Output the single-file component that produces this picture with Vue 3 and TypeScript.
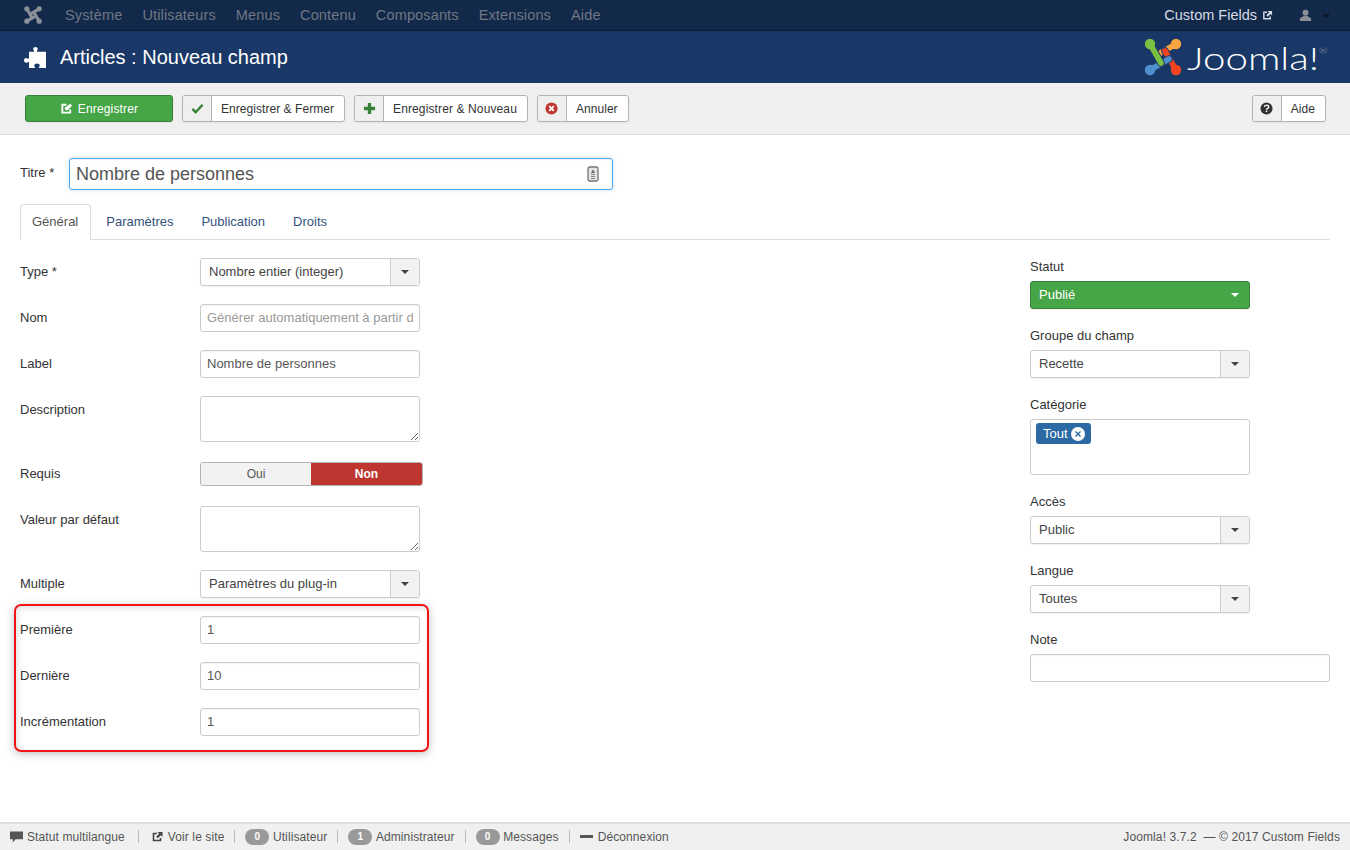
<script setup lang="ts">
const menu = ['Système', 'Utilisateurs', 'Menus', 'Contenu', 'Composants', 'Extensions', 'Aide']

const leftFields = [
  { label: 'Type *', kind: 'select', value: 'Nombre entier (integer)' },
  { label: 'Nom', kind: 'placeholder', value: 'Générer automatiquement à partir du titre' },
  { label: 'Label', kind: 'input', value: 'Nombre de personnes' },
  { label: 'Description', kind: 'textarea', value: '' },
  { label: 'Requis', kind: 'toggle', value: '' },
  { label: 'Valeur par défaut', kind: 'textarea', value: '' },
  { label: 'Multiple', kind: 'select', value: 'Paramètres du plug-in' },
]

const rangeFields = [
  { label: 'Première', value: '1' },
  { label: 'Dernière', value: '10' },
  { label: 'Incrémentation', value: '1' },
]

const tabs = ['Général', 'Paramètres', 'Publication', 'Droits']

// one arm of the logo, turned four times
const arm = 'M32 6L13 17'
const armColors = [
  { color: '#f9a541', turn: 0 },
  { color: '#f44321', turn: 90 },
  { color: '#5091cd', turn: 180 },
  { color: '#7ac143', turn: 270 },
]
</script>

<template>
  <div class="page">
    <nav class="navbar">
      <svg class="nav-logo" viewBox="0 0 38 38">
        <g v-for="a in armColors" :key="a.turn" :transform="`rotate(${a.turn} 19 19)`">
          <path :d="arm" fill="none" stroke="#8a8f98" stroke-width="6.500" stroke-linecap="round" />
          <circle cx="32" cy="6" r="5.500" fill="#8a8f98" />
        </g>
      </svg>
      <a v-for="item in menu" :key="item" class="nav-item">{{ item }}</a>
      <span class="nav-site">
        Custom Fields
        <svg class="ext" viewBox="0 0 12 12">
          <path d="M9 7v2.500H2v-7h3.500" fill="none" stroke="currentColor" stroke-width="1.600" />
          <path d="M6 1h5v5L9.300 4.300 6.300 7.300 4.700 5.700l3-3z" fill="currentColor" />
        </svg>
      </span>
      <svg class="nav-user" viewBox="0 0 14 14">
        <circle cx="7" cy="4" r="3.200" fill="#8a8f98" />
        <path d="M1 13v-2c0-2 3-2.500 4-3.500h4c1 1 4 1.500 4 3.500v2z" fill="#8a8f98" />
      </svg>
      <span class="nav-caret"></span>
    </nav>

    <header class="title-bar">
      <svg class="puzzle" viewBox="0 0 22 21">
        <path
          fill="#fff"
          d="M9.500 4.800c.4 0 .6-.2.6-.6 0-.9-.9-1.200-.9-2.200C9.200.7 10.300 0 11.500 0s2.300.7 2.300 2c0 1-.9 1.300-.9 2.200 0 .4.200.6.600.6H22V21h-6.500c-.4 0-.6-.2-.6-.5 0-.9.900-1.100.9-2 0-1.300-1.400-2-2.800-2s-2.800.7-2.800 2c0 .9.900 1.100.9 2 0 .3-.2.500-.6.500H5v-5.500c0-.4-.2-.6-.6-.6-.9 0-1.200.8-2.200.8C.8 15.700 0 14.500 0 13.300s.8-2.400 2.200-2.400c1 0 1.300.8 2.200.8.400 0 .6-.2.600-.6V4.800z"
        />
      </svg>
      <h1>Articles : Nouveau champ</h1>
      <div class="brand">
        <svg class="brand-mark" viewBox="0 0 38 38">
          <g v-for="a in armColors" :key="a.turn" :transform="`rotate(${a.turn} 19 19)`">
            <path :d="arm" fill="none" stroke="#1a3867" stroke-width="7.500" stroke-linecap="round" />
            <path :d="arm" fill="none" :stroke="a.color" stroke-width="5.500" stroke-linecap="round" />
            <circle cx="32" cy="6" r="5.200" :fill="a.color" />
          </g>
        </svg>
        <span class="brand-name">Joomla!<sup>®</sup></span>
      </div>
    </header>

    <div class="toolbar">
      <button class="tool tool-save">
        <svg class="ico" viewBox="0 0 14 14">
          <path d="M11 8v3.500H2.500V3H7" fill="none" stroke="#fff" stroke-width="2" />
          <path d="M5 6.500l1 2.500 2.500-.5L13 4l-2-2z" fill="#fff" />
        </svg>
        Enregistrer
      </button>
      <button class="tool">
        <span class="tool-icon">
          <svg class="ico" viewBox="0 0 14 14">
            <path d="M1.500 7.500l3.500 3.500 7.500-8" fill="none" stroke="#378137" stroke-width="2.600" />
          </svg>
        </span>
        <span class="tool-text">Enregistrer &amp; Fermer</span>
      </button>
      <button class="tool tool-new">
        <span class="tool-icon">
          <svg class="ico" viewBox="0 0 14 14">
            <path d="M7 1v12M1 7h12" fill="none" stroke="#378137" stroke-width="3.600" />
          </svg>
        </span>
        <span class="tool-text">Enregistrer &amp; Nouveau</span>
      </button>
      <button class="tool">
        <span class="tool-icon">
          <svg class="ico" viewBox="0 0 14 14">
            <circle cx="7" cy="7" r="6.500" fill="#bd362f" />
            <path d="M4.500 4.500l5 5M9.500 4.500l-5 5" stroke="#fff" stroke-width="2" />
          </svg>
        </span>
        <span class="tool-text">Annuler</span>
      </button>
      <button class="tool tool-help">
        <span class="tool-icon">
          <svg class="ico" viewBox="0 0 14 14">
            <circle cx="7" cy="7" r="6.500" fill="#333" />
            <path d="M4.800 5.400C4.900 4 5.900 3.400 7 3.400c1.300 0 2.300.8 2.300 1.900 0 1.700-2.300 1.500-2.300 3" fill="none" stroke="#fff" stroke-width="1.500" />
            <rect x="6.200" y="9.200" width="1.600" height="1.600" fill="#fff" />
          </svg>
        </span>
        <span class="tool-text">Aide</span>
      </button>
    </div>

    <main class="content">
      <div class="title-row">
        <label>Titre *</label>
        <div class="title-input">
          <input type="text" value="Nombre de personnes" />
          <svg class="contact-icon" viewBox="0 0 12 16">
            <rect x="1" y="1" width="10" height="14" rx="1.500" fill="#e4e4e4" stroke="#777" stroke-width="1.300" />
            <path d="M6 3.500L8 7H4z" fill="#666" />
            <path d="M4 8.500h4M4 10.500h4M4 12.500h4" stroke="#888" />
          </svg>
        </div>
      </div>

      <ul class="tabs">
        <li v-for="(tab, i) in tabs" :key="tab" :class="{ active: i === 0 }">{{ tab }}</li>
      </ul>

      <div class="columns">
        <div class="main-col">
          <div v-for="f in leftFields" :key="f.label" class="row" :class="{ 'row-toggle': f.kind === 'toggle' }">
            <label>{{ f.label }}</label>
            <div v-if="f.kind === 'select'" class="chosen">
              <span class="chosen-text">{{ f.value }}</span>
              <span class="chosen-arrow"><i></i></span>
            </div>
            <input v-else-if="f.kind === 'placeholder'" class="field" type="text" :placeholder="f.value" />
            <input v-else-if="f.kind === 'input'" class="field" type="text" :value="f.value" />
            <textarea v-else-if="f.kind === 'textarea'" class="area"></textarea>
            <div v-else class="toggle">
              <span class="toggle-off">Oui</span>
              <span class="toggle-on">Non</span>
            </div>
          </div>
          <div class="range-group">
            <div class="highlight"></div>
            <div v-for="f in rangeFields" :key="f.label" class="row">
              <label>{{ f.label }}</label>
              <input class="field" type="text" :value="f.value" />
            </div>
          </div>
        </div>

        <aside class="side-col">
          <div class="side-field">
            <label>Statut</label>
            <div class="chosen chosen-green">
              <span class="chosen-text">Publié</span>
              <span class="chosen-arrow"><i></i></span>
            </div>
          </div>
          <div class="side-field">
            <label>Groupe du champ</label>
            <div class="chosen">
              <span class="chosen-text">Recette</span>
              <span class="chosen-arrow"><i></i></span>
            </div>
          </div>
          <div class="side-field">
            <label>Catégorie</label>
            <div class="tag-box">
              <span class="tag">
                Tout
                <svg viewBox="0 0 14 14">
                  <circle cx="7" cy="7" r="7" fill="#fff" />
                  <path d="M4.500 4.500l5 5M9.500 4.500l-5 5" stroke="#2a69a3" stroke-width="1.400" />
                </svg>
              </span>
            </div>
          </div>
          <div class="side-field">
            <label>Accès</label>
            <div class="chosen">
              <span class="chosen-text">Public</span>
              <span class="chosen-arrow"><i></i></span>
            </div>
          </div>
          <div class="side-field">
            <label>Langue</label>
            <div class="chosen">
              <span class="chosen-text">Toutes</span>
              <span class="chosen-arrow"><i></i></span>
            </div>
          </div>
          <div class="side-field">
            <label>Note</label>
            <input class="field field-wide" type="text" />
          </div>
        </aside>
      </div>
    </main>

    <footer class="status">
      <span class="st st-first">
        <svg class="st-ico" viewBox="0 0 14 12"><path d="M0 0h14v8.500H6L3 12V8.500H0z" fill="#555" /></svg>
        Statut multilangue
      </span>
      <span class="st">
        <svg class="st-ico" viewBox="0 0 12 12">
          <path d="M9 7v2.500H2v-7h3.500" fill="none" stroke="#444" stroke-width="1.600" />
          <path d="M6 1h5v5L9.300 4.300 6.300 7.300 4.700 5.700l3-3z" fill="#444" />
        </svg>
        Voir le site
      </span>
      <span class="st"><b class="count">0</b>Utilisateur</span>
      <span class="st"><b class="count">1</b>Administrateur</span>
      <span class="st"><b class="count">0</b>Messages</span>
      <span class="st st-last"><i class="minus"></i>Déconnexion</span>
      <span class="copyright">Joomla! 3.7.2 &nbsp;— © 2017 Custom Fields</span>
    </footer>
  </div>
</template>

<style>
html,
body {
  margin: 0;
  background: #fff;
}
</style>

<style scoped>
.page {
  display: flex;
  flex-direction: column;
  width: 1350px;
  height: 850px;
  overflow: hidden;
  font-family: "Liberation Sans", Arial, sans-serif;
  font-size: 13px;
  color: #333;
}

.navbar {
  display: flex;
  align-items: center;
  height: 30px;
  padding: 0 20px 0 24px;
  background: #13294a;
  border-bottom: 1px solid #0c1b33;
  flex: none;
}

.nav-logo {
  width: 18px;
  height: 18px;
  margin-right: 23px;
}

.nav-item {
  margin-right: 20px;
  font-size: 14.500px;
  letter-spacing: .14px;
  color: #6f7785;
}

.nav-site {
  display: flex;
  align-items: center;
  gap: 5px;
  margin-left: auto;
  font-size: 14.500px;
  color: #d5dbe5;
}

.ext {
  width: 11px;
  height: 11px;
}

.nav-user {
  width: 13px;
  height: 13px;
  margin-left: 26px;
}

.nav-caret {
  width: 0;
  height: 0;
  margin: 2px 0 0 10px;
  border: 4px solid transparent;
  border-top-color: #0a1526;
  border-bottom: 0;
}

.title-bar {
  display: flex;
  align-items: center;
  height: 52px;
  padding: 0 24px;
  background: #1a3867;
  flex: none;
}

.puzzle {
  width: 22px;
  height: 21px;
  margin-right: 14px;
}

.title-bar h1 {
  margin: 0;
  font-size: 20px;
  font-weight: 400;
  color: #fff;
}

.brand {
  display: flex;
  align-items: center;
  gap: 5px;
  margin-left: auto;
}

.brand-mark {
  width: 38px;
  height: 38px;
}

.brand-name {
  width: 139px;
  font-family: Lato, sans-serif;
  font-size: 32px;
  font-weight: 300;
  color: #fff;
  white-space: nowrap;
  transform: scaleX(1.260);
  transform-origin: left center;
}

.brand-name sup {
  font-size: 8px;
  vertical-align: 16px;
  line-height: 0;
  color: #aab;
}

.toolbar {
  display: flex;
  gap: 9px;
  height: 52px;
  padding: 12px 24px 0 25px;
  box-sizing: border-box;
  background: #f0f0f0;
  border-bottom: 1px solid #dedede;
  flex: none;
}

.tool {
  display: flex;
  align-items: stretch;
  height: 27px;
  padding: 0;
  background: #fff;
  border: 1px solid #b3b3b3;
  border-radius: 3px;
  font: 12px "Liberation Sans", Arial, sans-serif;
  color: #333;
  box-shadow: 0 1px 2px rgba(0, 0, 0, .05);
}

.tool-icon {
  display: flex;
  align-items: center;
  justify-content: center;
  width: 28px;
  background: #efefef;
  border-right: 1px solid #b3b3b3;
  border-radius: 3px 0 0 3px;
}

.tool-text {
  display: flex;
  align-items: center;
  padding: 0 10px 0 9px;
  letter-spacing: .05px;
}

.tool-new .tool-text {
  letter-spacing: .12px;
}

.ico {
  width: 13px;
  height: 13px;
}

.tool-save {
  align-items: center;
  justify-content: center;
  gap: 5px;
  width: 148px;
  background: #46a546;
  border-color: #378137;
  color: #fff;
  letter-spacing: .15px;
}

.tool-help {
  margin-left: auto;
}

.content {
  flex: 1;
  padding: 23px 20px 0;
}

.title-row {
  display: flex;
  align-items: flex-start;
  margin-bottom: 14px;
}

.title-row label {
  width: 49px;
  padding-top: 7px;
  font-size: 13px;
}

.title-input {
  position: relative;
}

.title-input input {
  display: block;
  width: 544px;
  height: 32px;
  padding: 0 40px 0 6px;
  box-sizing: border-box;
  border: 1px solid #51a7e8;
  border-radius: 3px;
  outline: none;
  font: 18px "Liberation Sans", Arial, sans-serif;
  color: #555;
  box-shadow: inset 0 1px 1px rgba(0, 0, 0, .06), 0 0 4px rgba(82, 168, 236, .35);
}

.contact-icon {
  position: absolute;
  top: 8px;
  right: 14px;
  width: 12px;
  height: 16px;
}

.tabs {
  display: flex;
  height: 35px;
  margin: 0 0 18px;
  padding: 0;
  list-style: none;
  border-bottom: 1px solid #ddd;
}

.tabs li {
  height: 34px;
  padding: 0 12px 0 14px;
  line-height: 34px;
  color: #33517d;
  border: 1px solid transparent;
  border-bottom: 0;
}

.tabs li.active {
  height: 35px;
  padding: 0 12px 0 11px;
  background: #fff;
  color: #555;
  border-color: #ddd;
  border-radius: 4px 4px 0 0;
}

.columns {
  display: flex;
  justify-content: space-between;
}

.main-col {
  width: 600px;
}

.row {
  display: flex;
  align-items: flex-start;
  margin-bottom: 18px;
}

.row label {
  width: 180px;
  padding-top: 6px;
  flex: none;
}

.row-toggle {
  margin-top: 20px;
  margin-bottom: 20px;
}

.row-toggle label {
  padding-top: 4px;
}

.field {
  display: block;
  width: 220px;
  height: 28px;
  padding: 0 6px 2px;
  box-sizing: border-box;
  border: 1px solid #ccc;
  border-radius: 3px;
  outline: none;
  font: 13px "Liberation Sans", Arial, sans-serif;
  color: #555;
  box-shadow: inset 0 1px 1px rgba(0, 0, 0, .05);
}

.field::placeholder {
  color: #999;
  opacity: 1;
}

.field-wide {
  width: 300px;
}

.area {
  display: block;
  width: 220px;
  height: 46px;
  box-sizing: border-box;
  border: 1px solid #ccc;
  border-radius: 3px;
  outline: none;
}

.chosen {
  display: flex;
  align-items: center;
  width: 220px;
  height: 28px;
  box-sizing: border-box;
  background: #fff;
  border: 1px solid #ccc;
  border-radius: 3px;
  font-size: 13px;
  color: #444;
  box-shadow: 0 1px 1px rgba(0, 0, 0, .06);
}

.chosen-text {
  flex: 1;
  padding: 0 0 2px 8px;
}

.chosen-arrow {
  display: flex;
  align-items: center;
  justify-content: center;
  width: 28px;
  height: 100%;
  background: #f2f2f2;
  border-left: 1px solid #ccc;
  border-radius: 0 3px 3px 0;
}

.chosen-arrow i {
  width: 0;
  height: 0;
  border: 4px solid transparent;
  border-top-color: #444;
  border-bottom: 0;
}

.chosen-green {
  background: #46a546;
  border-color: #378137;
  color: #fff;
}

.chosen-green .chosen-arrow {
  background: transparent;
  border-left: 0;
}

.chosen-green .chosen-arrow i {
  border-top-color: #fff;
}

.toggle {
  display: flex;
  width: 223px;
  height: 24px;
  box-sizing: border-box;
  border: 1px solid #b3b3b3;
  border-radius: 3px;
  overflow: hidden;
  font-size: 12px;
  line-height: 22px;
  text-align: center;
}

.toggle-off {
  flex: 1;
  background: #f2f2f2;
  color: #555;
}

.toggle-on {
  width: 111px;
  background: #bd362f;
  font-weight: 700;
  color: #fff;
}

.range-group {
  position: relative;
}

.highlight {
  position: absolute;
  top: -12px;
  left: -6px;
  width: 415px;
  height: 148px;
  box-sizing: border-box;
  border: 2px solid #f41414;
  border-radius: 7px;
  box-shadow: 0 2px 8px rgba(0, 0, 0, .25), inset 2px 2px 6px rgba(0, 0, 0, .12);
  pointer-events: none;
}

.side-col {
  width: 300px;
  margin-top: 1px;
}

.side-field {
  margin-bottom: 19px;
}

.side-field label {
  display: block;
  height: 22px;
  line-height: 16px;
}

.tag-box {
  display: flex;
  align-items: flex-start;
  width: 220px;
  height: 56px;
  padding: 3px 5px;
  box-sizing: border-box;
  border: 1px solid #ccc;
  border-radius: 3px;
}

.tag {
  display: inline-flex;
  align-items: center;
  gap: 3px;
  height: 21px;
  padding: 0 6px 0 7px;
  background: #2a69a3;
  border-radius: 3px;
  font-size: 13px;
  color: #fff;
}

.tag svg {
  width: 14px;
  height: 14px;
}

.status {
  display: flex;
  align-items: center;
  height: 28px;
  padding: 0 10px 1px;
  box-sizing: border-box;
  background: #f0f0f0;
  border-top: 2px solid #dedede;
  font-size: 12px;
  letter-spacing: .1px;
  color: #555;
  flex: none;
}

.st {
  display: flex;
  align-items: center;
  height: 13px;
  padding-right: 10px;
  margin-right: 10px;
  border-right: 1px solid #bbb;
}

.st-first {
  padding-right: 13px;
  margin-right: 12px;
}

.st-last {
  border-right: 0;
}

.st-ico {
  width: 13px;
  height: 12px;
  margin-right: 4px;
}

.count {
  display: inline-block;
  width: 24px;
  height: 16px;
  margin-right: 3.500px;
  background: #999;
  border-radius: 9px;
  font-size: 10px;
  line-height: 16px;
  text-align: center;
  color: #fff;
}

.minus {
  width: 13px;
  height: 3px;
  margin-right: 5px;
  background: #555;
}

.copyright {
  margin-left: auto;
}
</style>
